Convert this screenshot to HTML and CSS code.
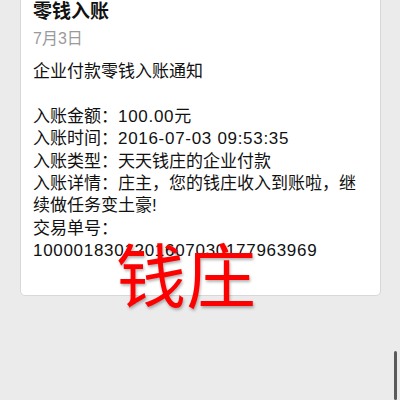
FILE: index.html
```html
<!DOCTYPE html>
<html lang="zh-CN">
<head>
    <meta charset="UTF-8">
    <meta name="viewport" content="width=device-width, initial-scale=1.0">
    <title>零钱入账</title>
    <link rel="stylesheet" href="styles.css">
</head>
<body>
    <div class="card">
        <div class="title">零钱入账</div>
        <div class="date">7月3日</div>

        <!-- 通知内容 -->
        <div class="content">
            企业付款零钱入账通知<br>
            <br>
            入账金额：<span class="num">100.00</span>元<br>
            入账时间：<span class="num">2016-07-03 09:53:35</span><br>
            入账类型：天天钱庄的企业付款<br>
            入账详情：庄主，您的钱庄收入到账啦，继续做任务变土豪!<br>
            交易单号：<br>
            <span class="num">1000018301201607030177963969</span>
        </div>
    </div>

    <div class="stamp">钱庄</div>
    <div class="scrollbar"></div>
</body>
</html>
```

FILE: styles.css
```css
body {
    font-family: 'Liberation Sans', 'Noto Sans CJK SC', sans-serif;
    background: #ebebeb;
    color: #111;
    margin: 0;
    padding: 0;
    height: 400px;
    overflow: hidden;
}
.card {
    background: #fff;
    margin: -6px 19px 0 20px;
    padding: 6px 12px 32px 12px;
    border: 1px solid #d8d8d8;
    border-radius: 5px;
}
.title {
    font-size: 19px;
    line-height: 22px;
    font-weight: bold;
    color: #111;
}
.date {
    font-size: 16px;
    line-height: 24px;
    margin-top: 4px;
    color: #9a9a9a;
}
.content {
    font-size: 17px;
    line-height: 22.4px;
    margin-top: 10px;
}
.num {
    letter-spacing: 0.7px;
}
.stamp {
    position: absolute;
    left: 116px;
    top: 238px;
    font-family: 'Noto Sans CJK SC', sans-serif;
    font-size: 70px;
    line-height: 1;
    color: #ff0000;
    text-shadow: 1px 2px 3px rgba(0, 0, 0, 0.3);
}
.scrollbar {
    position: absolute;
    right: 3px;
    top: 351px;
    width: 3px;
    height: 49px;
    background: #5a5a5a;
    border-radius: 2px;
}
```
